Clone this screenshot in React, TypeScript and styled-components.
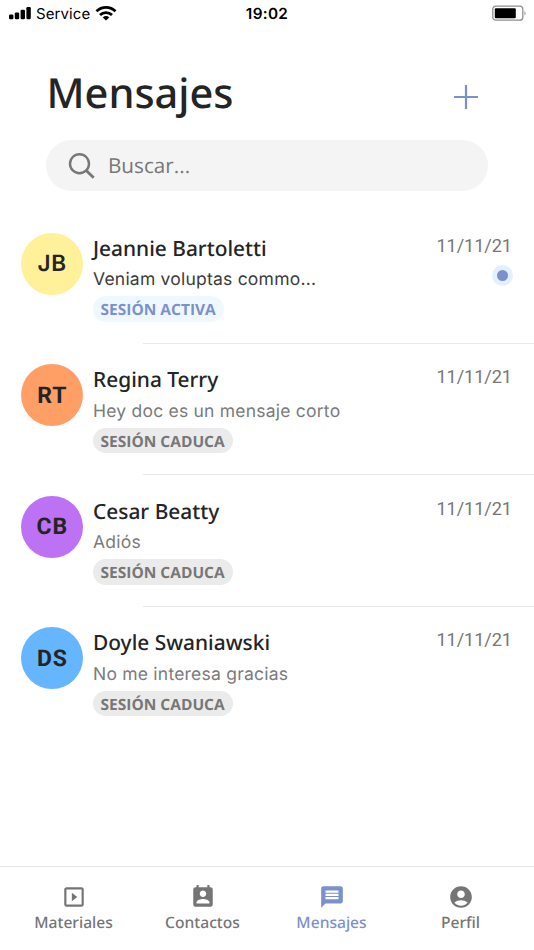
import React from "react";
import styled, { createGlobalStyle } from "styled-components";
import { MdSlideshow, MdPermContactCalendar, MdMessage, MdAccountCircle } from "react-icons/md";

const GlobalStyle = createGlobalStyle`
  * { box-sizing: border-box; }
  body { margin: 0; background: #fff; text-rendering: geometricPrecision; }
`;

const Screen = styled.div`
  width: 534px;
  height: 950px;
  display: flex;
  flex-direction: column;
  overflow: hidden;
  background: #fff;
  color: #242424;
  font-family: "Open Sans", "Noto Sans", sans-serif;
`;

const StatusBar = styled.div`
  height: 28px;
  flex: none;
  display: grid;
  grid-template-columns: 1fr auto 1fr;
  align-items: center;
  padding: 0 7px 2px 9px;
  color: #000;
  font-family: Inter, sans-serif;
  font-size: 15px;
`;

const Carrier = styled.div`
  display: flex;
  align-items: center;
  gap: 5px;
  letter-spacing: 0.1px;
  svg { flex: none; }
`;

const Clock = styled.div`
  font-weight: 600;
  font-size: 15.3px;
  letter-spacing: 0.3px;
  margin-right: 2px;
`;

const Battery = styled.svg`
  justify-self: end;
`;

const Header = styled.header`
  flex: none;
  height: 112px;
  display: flex;
  justify-content: space-between;
  padding: 37px 56px 0 46.5px;
`;

const Title = styled.h1`
  margin: 0;
  font-family: "Noto Sans", sans-serif;
  font-size: 41.5px;
  line-height: 57.5px;
  font-weight: 500;
`;

const AddIcon = styled.svg`
  margin-top: 20px;
`;

const Search = styled.div`
  flex: none;
  height: 51px;
  margin: 0 46px 21px;
  padding-left: 22px;
  display: flex;
  align-items: center;
  gap: 12px;
  border-radius: 26px;
  background: #f4f4f4;
  color: #777;
  font-size: 20.7px;
`;

const List = styled.main`
  flex: 1;
`;

const Row = styled.article`
  position: relative;
  height: 131.6px;
  display: flex;
  padding: 20.6px 22px 0 21px;
  &:not(:last-child)::after {
    content: "";
    position: absolute;
    left: 143px;
    right: 0;
    bottom: 0;
    height: 1px;
    background: #e8e8e8;
  }
`;

const Avatar = styled.div<{ $color: string; $font: string }>`
  flex: none;
  width: 62px;
  height: 62px;
  border-radius: 50%;
  background: ${(p) => p.$color};
  display: flex;
  align-items: center;
  justify-content: center;
  padding-left: 0.5px;
  font: ${(p) => p.$font};
  letter-spacing: 0.8px;
`;

const Body = styled.div`
  flex: 1;
  min-width: 0;
  padding-left: 10px;
`;

const Name = styled.div`
  height: 30.5px;
  line-height: 32.5px;
  font-family: "Noto Sans", sans-serif;
  font-size: 20.9px;
  font-weight: 500;
  white-space: nowrap;
`;

const Message = styled.div<{ $unread?: boolean }>`
  height: 33px;
  line-height: 33.5px;
  font-family: Inter, sans-serif;
  font-size: 17.5px;
  white-space: nowrap;
  color: ${(p) => (p.$unread ? "#3c3c3c" : "#7b7b7b")};
  letter-spacing: 0.22px;
`;

const Tag = styled.span<{ $active?: boolean }>`
  display: block;
  width: fit-content;
  height: 25.5px;
  padding: 0 8px 0 7.5px;
  border-radius: 13px;
  line-height: 26px;
  font-size: 15.5px;
  font-weight: 700;
  white-space: nowrap;
  color: ${(p) => (p.$active ? "#7a91cc" : "#777")};
  background: ${(p) => (p.$active ? "#f0f8ff" : "#ebebeb")};
`;

const Meta = styled.div`
  flex: none;
  display: flex;
  flex-direction: column;
  align-items: flex-end;
`;

const DateText = styled.div`
  font: 400 18.2px/27.5px Roboto, sans-serif;
  letter-spacing: -0.1px;
  color: #777;
`;

const Unread = styled.div`
  width: 21px;
  height: 21px;
  margin: 4.9px -1px 0 0;
  border: 5px solid #e3f1ff;
  border-radius: 50%;
  background: #7a91cc;
`;

const TabBar = styled.nav`
  flex: none;
  height: 84px;
  display: flex;
  padding: 0 9px;
  border-top: 1px solid #e6e6e6;
`;

const Tab = styled.div<{ $active?: boolean }>`
  flex: 1;
  display: flex;
  flex-direction: column;
  align-items: center;
  padding-top: 17px;
  font-family: "Noto Sans", sans-serif;
  font-size: 15.6px;
  line-height: 24px;
  font-weight: 500;
  color: ${(p) => (p.$active ? "#7a91cc" : "#757575")};
`;

const chats = [
  { initials: "JB", name: "Jeannie Bartoletti", text: "Veniam voluptas commo...", color: "#fff09a", font: "600 22.5px Inter, sans-serif", unread: true },
  { initials: "RT", name: "Regina Terry", text: "Hey doc es un mensaje corto", color: "#ff9f66", font: "700 23px Roboto, sans-serif" },
  { initials: "CB", name: "Cesar Beatty", text: "Adiós", color: "#bd72f3", font: "700 23px Roboto, sans-serif" },
  { initials: "DS", name: "Doyle Swaniawski", text: "No me interesa gracias", color: "#66b5ff", font: "700 23px Roboto, sans-serif" },
];

const tabs = [
  { label: "Materiales", Icon: MdSlideshow },
  { label: "Contactos", Icon: MdPermContactCalendar },
  { label: "Mensajes", Icon: MdMessage, active: true },
  { label: "Perfil", Icon: MdAccountCircle },
];

export default function App() {
  return (
    <Screen>
      <GlobalStyle />
      <StatusBar>
        <Carrier>
          <svg width="22" height="14" viewBox="0 0 22 14">
            <rect x="0" y="8.5" width="4.4" height="4.8" rx="1.2" />
            <rect x="5.8" y="6.5" width="4.4" height="6.8" rx="1.2" />
            <rect x="11.6" y="3.7" width="4.4" height="9.6" rx="1.2" />
            <rect x="17.4" y="1" width="4.4" height="12.3" rx="1.2" />
          </svg>
          Service
          <svg width="22" height="16" viewBox="0 0 22 16" fill="none" stroke="#000" strokeWidth="2.8">
            <path d="M1.5 6.2a13.5 13.5 0 0 1 19 0" />
            <path d="M5 10a8.6 8.6 0 0 1 12 0" />
            <path d="M11 15.6 7.8 12.4a4.6 4.6 0 0 1 6.4 0Z" fill="#000" stroke="none" />
          </svg>
        </Carrier>
        <Clock>19:02</Clock>
        <Battery width="35" height="16" viewBox="0 0 35 16">
          <rect x="0.8" y="1.2" width="30" height="14" rx="3" fill="#fff" stroke="#8f8f8f" strokeWidth="1.3" />
          <rect x="2.8" y="3.2" width="21" height="10" rx="1" />
          <path d="M32.5 5.9q2.2 2.3 0 4.6z" fill="#8f8f8f" />
        </Battery>
      </StatusBar>
      <Header>
        <Title>Mensajes</Title>
        <AddIcon width="24" height="24" viewBox="0 0 24 24" stroke="#7a91cc" strokeWidth="2.2">
          <path d="M12 0v24M0 12h24" />
        </AddIcon>
      </Header>
      <Search>
        <svg width="28" height="28" viewBox="0 0 28 28" fill="none" stroke="#777" strokeWidth="2.4">
          <circle cx="11.5" cy="11.7" r="9.5" />
          <path d="m18.2 18.4 7.5 7.3" strokeWidth="2.8" />
        </svg>
        Buscar...
      </Search>
      <List>
        {chats.map((c) => (
          <Row key={c.name}>
            <Avatar $color={c.color} $font={c.font}>{c.initials}</Avatar>
            <Body>
              <Name>{c.name}</Name>
              <Message $unread={c.unread}>{c.text}</Message>
              <Tag $active={c.unread}>{c.unread ? "SESIÓN ACTIVA" : "SESIÓN CADUCA"}</Tag>
            </Body>
            <Meta>
              <DateText>11/11/21</DateText>
              {c.unread && <Unread />}
            </Meta>
          </Row>
        ))}
      </List>
      <TabBar>
        {tabs.map(({ label, Icon, active }) => (
          <Tab key={label} $active={active}>
            <Icon size={26} />
            {label}
          </Tab>
        ))}
      </TabBar>
    </Screen>
  );
}
